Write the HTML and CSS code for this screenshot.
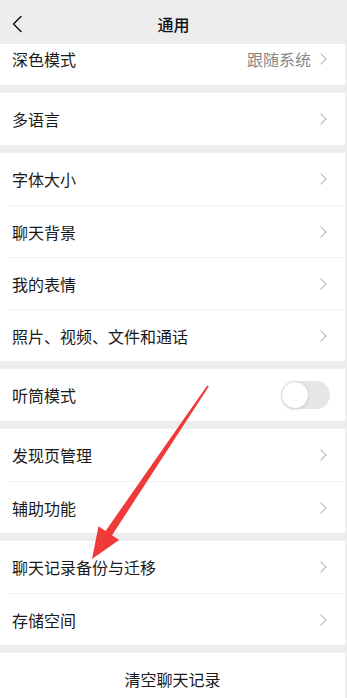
FILE: index.html
```html
<!DOCTYPE html>
<html lang="zh-CN">
<head>
<meta charset="utf-8">
<title>通用</title>
<link rel="stylesheet" href="styles.css">
</head>
<body>
<div class="page">
  <header class="nav">
    <svg class="back" width="12" height="18" viewBox="0 0 12 18"><path d="M10 1.5 L2.5 9 L10 16.5" fill="none" stroke="#1a1a1a" stroke-width="1.6" stroke-linecap="round" stroke-linejoin="round"/></svg>
    <div class="title">通用</div>
  </header>

  <section class="group">
    <div class="row cut"><span class="label">深色模式</span><span class="value">跟随系统</span><span class="chev"></span></div>
  </section>

  <section class="group">
    <div class="row"><span class="label">多语言</span><span class="chev"></span></div>
  </section>

  <section class="group">
    <div class="row"><span class="label">字体大小</span><span class="chev"></span></div>
    <div class="row sep"><span class="label">聊天背景</span><span class="chev"></span></div>
    <div class="row sep"><span class="label">我的表情</span><span class="chev"></span></div>
    <div class="row sep"><span class="label">照片、视频、文件和通话</span><span class="chev"></span></div>
  </section>

  <section class="group">
    <div class="row"><span class="label">听筒模式</span><span class="toggle"><span class="knob"></span></span></div>
  </section>

  <section class="group">
    <div class="row"><span class="label">发现页管理</span><span class="chev"></span></div>
    <div class="row sep"><span class="label">辅助功能</span><span class="chev"></span></div>
  </section>

  <section class="group">
    <div class="row"><span class="label">聊天记录备份与迁移</span><span class="chev"></span></div>
    <div class="row sep"><span class="label">存储空间</span><span class="chev"></span></div>
  </section>

  <section class="group">
    <div class="row center"><span class="label">清空聊天记录</span></div>
  </section>

  <svg class="arrow" width="347" height="698" viewBox="0 0 347 698">
    <polygon points="208.8,386.4 207.2,385.4 105.6,530.9 98.5,526.2 92,559 119.1,540 112,535.3" fill="#f03a3a"/>
  </svg>
</div>
</body>
</html>
```

FILE: styles.css
```css
* { box-sizing: border-box; }
html, body { margin: 0; padding: 0; }
body {
  background: #ededed;
  font-family: "Noto Sans CJK SC", "Noto Sans", sans-serif;
  color: #1a1a1a;
  width: 347px;
  height: 698px;
  overflow: hidden;
}
.page { position: relative; width: 347px; height: 698px; }
.nav {
  height: 44px;
  padding-top: 4px;
  display: flex;
  align-items: center;
  justify-content: center;
  position: relative;
  background: #ededed;
}
.back { position: absolute; left: 11px; top: 15px; }
.title { font-size: 16px; font-weight: 500; color: #111; line-height: 22px; }
.group {
  background: #fff;
  margin: 0 2px 8px 0;
}
.row {
  height: 52px;
  display: flex;
  align-items: center;
  padding: 0 18px 0 12px;
  font-size: 16px;
  line-height: 22px;
}
.row.cut { height: 41px; padding-bottom: 11px; padding-top: 0; }
.row.sep { border-top: 1px solid #f3f3f3; margin-left: 8px; padding-left: 4px; }
.label { flex: 1; }
.value { color: #888; margin-right: 6px; }
.chev {
  width: 8px;
  height: 8px;
  border-top: 1.3px solid #b6b6b6;
  border-right: 1.3px solid #b6b6b6;
  transform: rotate(45deg);
  margin-right: 2px;
}
.row.center { justify-content: center; padding: 0; }
.row.center .label { flex: none; }
.toggle {
  width: 49px;
  height: 28px;
  border-radius: 14px;
  background: #e6e6e6;
  display: flex;
  align-items: center;
  margin-right: -3px;
}
.knob {
  width: 28px;
  height: 28px;
  border-radius: 50%;
  background: #fff;
  border: 1px solid #dcdcdc;
  box-shadow: 0 1px 2px rgba(0,0,0,0.12);
}
.arrow { position: absolute; left: 0; top: 0; pointer-events: none; }
```
